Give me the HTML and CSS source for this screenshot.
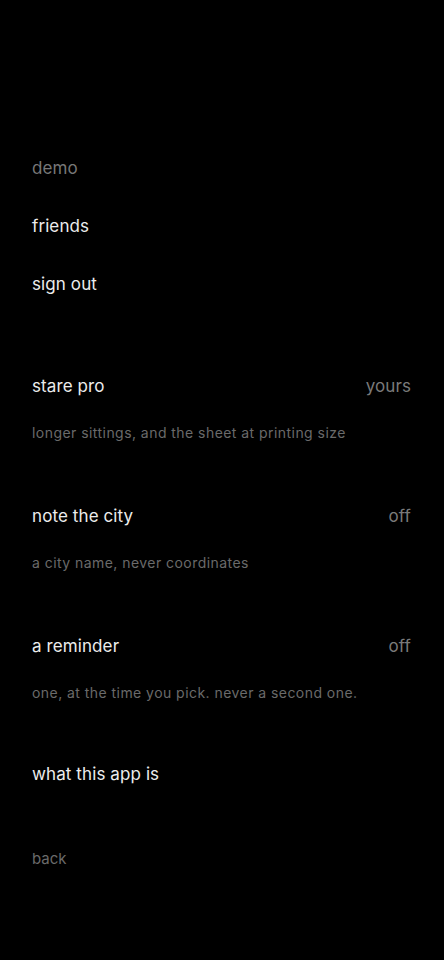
FILE: index.html
```html
<!DOCTYPE html>
<html lang="en">
<head>
<meta charset="utf-8">
<title>settings</title>
<link rel="stylesheet" href="styles.css">
</head>
<body>
<main class="page">
  <nav class="menu">
    <div class="menu-item muted">demo</div>
    <div class="menu-item">friends</div>
    <div class="menu-item">sign out</div>
  </nav>
  <section class="settings">
    <div class="setting">
      <div class="setting-row"><span class="title">stare pro</span><span class="value">yours</span></div>
      <p class="caption">longer sittings, and the sheet at printing size</p>
    </div>
    <div class="setting">
      <div class="setting-row"><span class="title">note the city</span><span class="value">off</span></div>
      <p class="caption">a city name, never coordinates</p>
    </div>
    <div class="setting">
      <div class="setting-row"><span class="title">a reminder</span><span class="value">off</span></div>
      <p class="caption">one, at the time you pick. never a second one.</p>
    </div>
    <div class="setting-row about"><span class="title">what this app is</span></div>
  </section>
  <div class="back">back</div>
</main>
</body>
</html>
```
FILE: styles.css
```css
html, body {
  margin: 0;
  padding: 0;
  background: #000;
}
body {
  font-family: Inter, "Noto Sans", "Liberation Sans", sans-serif;
  color: #ececec;
  width: 444px;
  min-height: 960px;
}
.page {
  display: flex;
  flex-direction: column;
  padding: 139px 33px 0 32px;
}
.menu {
  display: flex;
  flex-direction: column;
}
.menu-item {
  font-size: 17px;
  line-height: 58px;
  height: 58px;
  letter-spacing: 0.1px;
}
.muted {
  color: #777;
}
.settings {
  display: flex;
  flex-direction: column;
  margin-top: 61px;
  gap: 61px;
}
.setting {
  display: flex;
  flex-direction: column;
  gap: 25px;
}
.setting-row {
  display: flex;
  justify-content: space-between;
  align-items: center;
  height: 24px;
  font-size: 17px;
  line-height: 24px;
  letter-spacing: 0.1px;
}
.value {
  color: #7a7a7a;
}
.caption {
  margin: 0;
  font-size: 14px;
  line-height: 20px;
  height: 20px;
  color: #6a6a6a;
  letter-spacing: 0.45px;
}
.about {
  margin-top: -2px;
}
.back {
  margin-top: 63px;
  font-size: 15px;
  line-height: 20px;
  color: #6a6a6a;
}
```
